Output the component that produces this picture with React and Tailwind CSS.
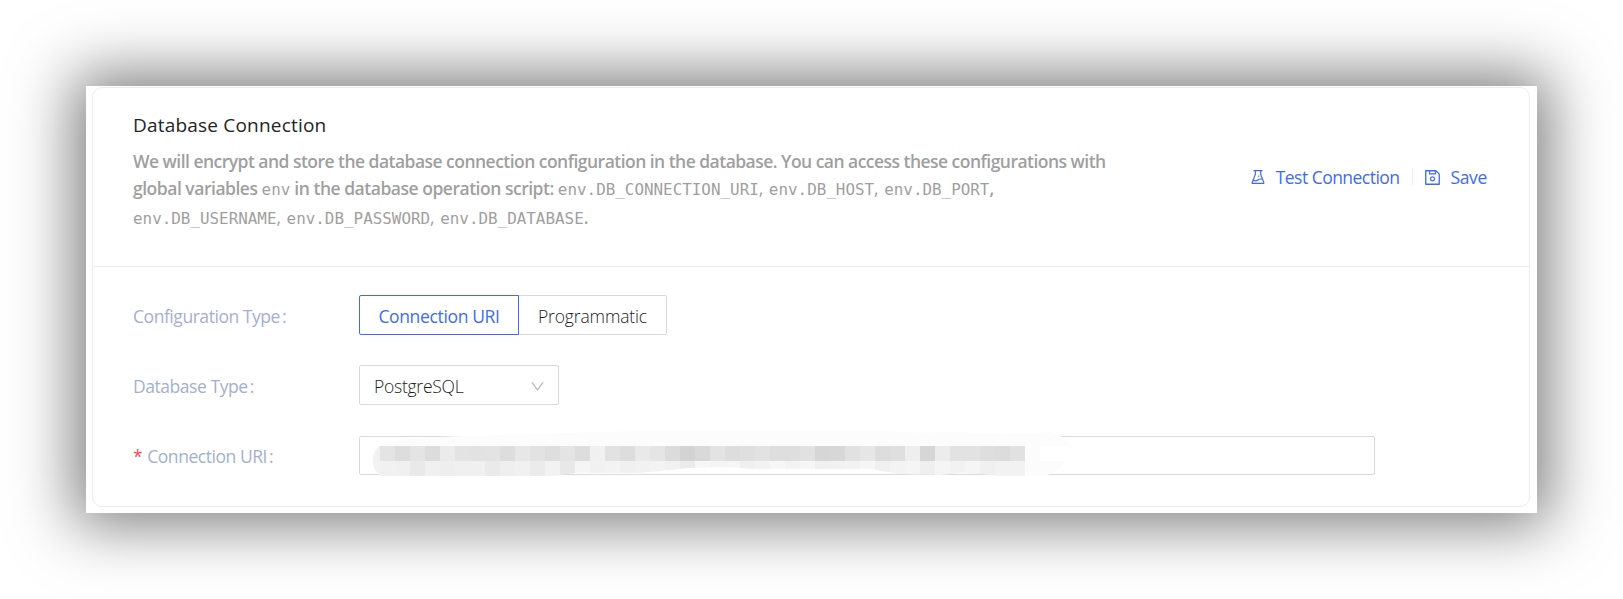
import { AiOutlineExperiment, AiOutlineSave, AiOutlineDown } from "react-icons/ai";

const CELL = 15;

// Grey level of each redaction block, left to right.
const TOP_ROW = [
  228, 221, 228, 220, 235, 227, 226, 227, 221, 231, 226, 222, 228, 221, 240, 226, 221, 233, 229, 219, 211, 217, 227,
  221, 223, 226, 222, 222, 225, 214, 215, 225, 230, 221, 223, 238, 214, 236, 226, 226, 222, 220, 225,
];
const BOTTOM_ROW = [
  241, 240, 233, 240, 238, 240, 240, 234, 239, 241, 235, 242, 232, 245, 241, 243, 240, 241, 243, 241, 235, 247, 245,
  246, 239, 242, 246, 243, 246, 240, 241, 242, 246, 240, 243, 245, 239, 245, 242, 245, 240, 242, 242,
];

const grey = (v) => `rgb(${v},${v},${v})`;

function Mosaic() {
  return (
    <svg className="absolute left-[12px] -top-[7px]" width="340" height="46" viewBox="372 430 340 46" overflow="visible">
      <defs>
        <clipPath id="brush">
          <path d="M380 476 C374 470 373 467 373 460 C373 452 377 446 385 443 C400 439 430 437 462 436 C540 434 600 432 640 431 L890 431 C920 434 940 432 960 432 C1000 435 1030 434 1050 432 C1060 434 1068 439 1069 446 C1069 460 1060 472 1044 476 L1000 476 L980 474 L960 473 L940 475 L900 474 L870 469 L755 469 L725 467 L690 468 L640 473 L575 473 L555 476 Z" />
        </clipPath>
      </defs>
      <g clipPath="url(#brush)" shapeRendering="crispEdges">
        <rect x="365" y="428" width="710" height="18" fill="#fcfcfc" />
        <rect x="365" y="446" width="15" height="15" fill="#f1f1f1" />
        <rect x="365" y="461" width="15" height="15" fill="#f2f2f2" />
        {TOP_ROW.map((v, i) => (
          <rect key={i} x={380 + i * CELL} y="446" width={CELL} height="15" fill={grey(v)} />
        ))}
        {BOTTOM_ROW.map((v, i) => (
          <rect key={i} x={380 + i * CELL} y="461" width={CELL} height="15" fill={grey(v)} />
        ))}
        <rect x="1025" y="446" width="15" height="30" fill="#fcfcfc" />
        <rect x="1040" y="446" width="35" height="15" fill="#fff" />
        <rect x="1040" y="461" width="35" height="15" fill="#fcfcfc" />
      </g>
    </svg>
  );
}

function Code({ children }) {
  return <code className="font-['DejaVu_Sans_Mono',monospace] text-[15.9px] font-normal tracking-normal">{children}</code>;
}

function Comma() {
  return <span className="font-normal tracking-[0.5px]">, </span>;
}

function Row({ label, required, children }) {
  return (
    <div className="flex h-10 items-center">
      <div className="flex w-[226px] pt-[2px] text-[17.5px] tracking-[-0.45px] text-[#a3b0d2]">
        {required && <span className="mr-[5px] text-[#ff4d4f]">*</span>}
        <span>{label}</span>
        <span className="ml-[2px]">:</span>
      </div>
      {children}
    </div>
  );
}

export default function App() {
  return (
    <div className="h-[599px] w-[1623px] overflow-hidden bg-white p-[86px] pb-0 font-['Open_Sans','Noto_Sans',sans-serif]">
      <div className="h-[427px] w-[1451px] bg-white pl-[6px] pt-px shadow-[0_0_58px_12px_rgba(0,0,0,0.51)]">
        <div className="h-[420px] w-[1438px] rounded-[10px] border border-[#ececec]">
          <header className="flex h-[179px] items-center justify-between border-b border-[#ececec] pl-10 pr-[42px]">
            <div className="h-full whitespace-nowrap pt-[22px]">
              <h1 className="h-[30px] text-[19px] font-medium leading-[30px] tracking-[0.2px] text-[#242424]">Database Connection</h1>
              <div className="mt-[7px] text-[17.5px] font-semibold tracking-[-0.53px] text-[#9f9f9f]">
                <p className="h-[27px] leading-[28px]">
                  We will encrypt and store the database connection configuration in the database. You can access these configurations with
                </p>
                <p className="h-[29px] leading-[28px] tracking-[-0.48px]">
                  global variables <Code>env</Code> in the database operation script: <Code>env.DB_CONNECTION_URI</Code><Comma /><Code>env.DB_HOST</Code><Comma /><Code>env.DB_PORT</Code>,
                </p>
                <p className="h-[29px] leading-[28px]">
                  <Code>env.DB_USERNAME</Code><Comma /><Code>env.DB_PASSWORD</Code><Comma /><Code>env.DB_DATABASE</Code>.
                </p>
              </div>
            </div>
            <div className="flex items-center whitespace-nowrap text-[17.5px] tracking-[-0.53px] text-[#3e6bf6]">
              <AiOutlineExperiment size={18} />
              <span className="ml-[9px]">Test Connection</span>
              <span className="ml-[12px] mr-[10px] h-4 w-px bg-[#ececec]" />
              <AiOutlineSave size={19} />
              <span className="ml-[9px] tracking-[-0.35px]">Save</span>
            </div>
          </header>
          <div className="flex flex-col gap-[30px] pl-10 pt-[28px]">
            <Row label="Configuration Type">
              <div className="flex h-10 text-[17.5px] tracking-[-0.35px]">
                <button className="h-10 w-[160px] rounded-l-[2px] border border-[#3e6bf6] pt-[2px] text-[#3e6bf6]">Connection URI</button>
                <button className="h-10 w-[148px] rounded-r-[2px] border border-l-0 border-[#d9d9d9] pt-[2px] font-light tracking-[-0.15px] text-[#1c1c1c]">Programmatic</button>
              </div>
            </Row>
            <Row label="Database Type">
              <div className="flex h-10 w-[200px] items-center justify-between rounded-[2px] border border-[#d9d9d9] pl-[14px] pr-[12px] text-[17.5px] font-light tracking-[-0.25px] text-[#1c1c1c]">
                <span className="pt-[2px]">PostgreSQL</span>
                <AiOutlineDown size={17} className="relative top-px text-[#bfbfbf]" />
              </div>
            </Row>
            <Row label="Connection URI" required>
              <div className="relative h-[39px] w-[1016px] rounded-[2px] border border-[#d9d9d9]">
                <Mosaic />
              </div>
            </Row>
          </div>
        </div>
      </div>
    </div>
  );
}
